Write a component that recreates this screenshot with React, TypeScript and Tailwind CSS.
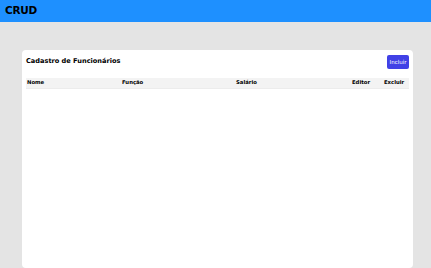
const font = { fontFamily: '"DejaVu Sans", "Noto Sans", sans-serif' }

const colunas = ['Nome', 'Função', 'Salário', 'Editor', 'Excluir']

export default function App() {
  return (
    <div className="h-[268px] w-[431px] overflow-hidden bg-[#e4e4e4] flex flex-col" style={font}>
      <header className="h-[22px] bg-[#1e90ff] flex items-center px-[5px] shrink-0">
        <h1 className="text-[10.5px] font-bold text-black tracking-tight">CRUD</h1>
      </header>
      <main className="flex-1 px-[22px] pt-[28px]">
        <div className="h-full w-[391px] bg-white rounded-[4px] px-[4px] pt-[5px]">
          <div className="flex items-center justify-between h-[14px]">
            <h2 className="text-[6.6px] font-bold text-black">Cadastro de Funcionários</h2>
            <button className="h-[14px] w-[22px] rounded-[2px] bg-[#4141e6] text-white text-[5.5px]">
              Incluir
            </button>
          </div>
          <div className="mt-[9px] grid grid-cols-[95px_114px_116px_32px_26px] h-[11px] items-center bg-[#f3f3f3] border-b border-[#ececec]">
            {colunas.map((c) => (
              <span key={c} className="pl-[1px] text-[5.3px] font-bold text-black">
                {c}
              </span>
            ))}
          </div>
        </div>
      </main>
    </div>
  )
}
